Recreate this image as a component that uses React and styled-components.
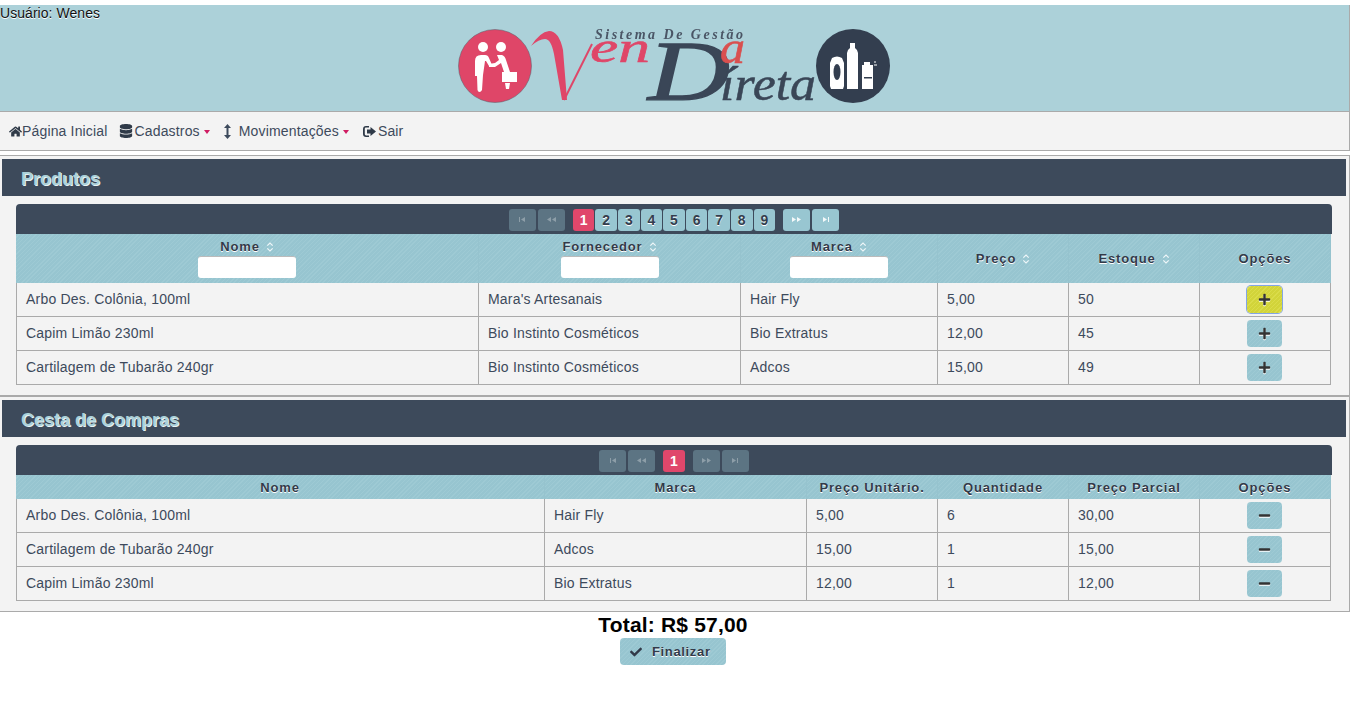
import React from 'react';
import styled, { createGlobalStyle } from 'styled-components';
import { FaHome, FaDatabase, FaCheck, FaPlus, FaMinus } from 'react-icons/fa';

const Global = createGlobalStyle`
  html, body { margin: 0; padding: 0; background: #fff; }
  body { font-family: "Liberation Sans", Arial, sans-serif; font-size: 14px; overflow: hidden; }
  * { box-sizing: border-box; }
`;

const stripes = `repeating-linear-gradient(135deg, #97c5d0 0, #97c5d0 2px, #9ecad4 2px, #9ecad4 3px)`;

const Page = styled.div`
  width: 1350px;
  padding-top: 5px;
`;
const Header = styled.header`
  position: relative;
  height: 107px;
  background: #acd1d9;
  border-bottom: 1px solid #aaa;
  border-right: 1px solid #aaa;
  display: flex;
  justify-content: flex-start;
  padding: 23px 0 0 458px;
`;
const UserLabel = styled.div`
  position: absolute;
  left: 0;
  top: 0;
  font-size: 14px;
  letter-spacing: 0.05px;
  line-height: 16px;
  color: #111;
  text-shadow: 0 1px 0 #fff;
`;
const Nav = styled.nav`
  height: 39px;
  background: #f3f3f3;
  border-bottom: 1px solid #aaa;
  border-right: 1px solid #aaa;
  display: flex;
  align-items: center;
  padding-left: 9px;
  color: #3d4a5c;
  font-size: 14px;
  letter-spacing: 0.16px;
`;
const NavItem = styled.div`
  display: flex;
  align-items: center;
  margin-right: ${p => p.$gap}px;
  white-space: nowrap;
  svg { flex: none; }
`;
const NavIconSlot = styled.span`
  display: flex;
  margin-right: ${p => p.$gap}px;
`;
const Caret = styled.span`
  width: 0;
  height: 0;
  margin-left: 4px;
  margin-top: 2px;
  border-left: 3.5px solid transparent;
  border-right: 3.5px solid transparent;
  border-top: 4px solid #d01c62;
`;
const Panel = styled.section`
  background: #f3f3f3;
  border-top: 1px solid #aaa;
  border-bottom: 1px solid #aaa;
  border-right: 1px solid #aaa;
  padding: 3px 3px 10px 2px;
  margin-top: ${p => p.$top}px;
`;
const Title = styled.h2`
  margin: 0;
  height: 37px;
  background: #3d4a5b;
  color: #acd1d9;
  font-size: 18px;
  line-height: 41px;
  font-weight: bold;
  padding-left: 19px;
  text-shadow: 1px 1px 0 #e8f4f6;
`;
const TableBox = styled.div`
  width: 1316px;
  margin: 8px 0 0 14px;
`;
const Pager = styled.div`
  height: 30px;
  background: #3d4a5b;
  border-radius: 4px 4px 0 0;
  display: flex;
  align-items: center;
  justify-content: center;
  padding-top: 1px;
`;
const PagerGroup = styled.div`
  display: flex;
  gap: 2px;
  margin: 0 4px;
`;
const PageNumbers = styled.div`
  display: flex;
  gap: 1px;
  margin: 0 4px;
`;
const PageNav = styled.div`
  width: 27px;
  height: 22px;
  border-radius: 3px;
  display: flex;
  align-items: center;
  justify-content: center;
  background: ${p => (p.$disabled ? '#5c7483' : '#98c6d1')};
  svg { display: block; opacity: ${p => (p.$disabled ? 0.3 : 0.9)}; }
`;
const PageNum = styled.div`
  height: 22px;
  padding: 0 6.9px;
  border-radius: 3px;
  font-size: 14px;
  font-weight: bold;
  line-height: 23px;
  color: ${p => (p.$active ? '#fff' : '#333d4d')};
  text-shadow: ${p => (p.$active ? 'none' : '0 1px 0 #fff')};
  background: ${p => (p.$active ? '#e0476b' : '#98c6d1')};
`;
const Table = styled.table`
  width: 1315px;
  border-collapse: separate;
  border-spacing: 0;
  table-layout: fixed;
`;
const Th = styled.th`
  height: ${p => p.$h}px;
  padding: 0;
  background: ${stripes};
  color: #323a49;
  font-size: 13px;
  font-weight: bold;
  letter-spacing: 0.85px;
  text-shadow: 0 1px 0 #fff;
  text-align: center;
  vertical-align: middle;
  border-right: 1px solid #96c3ce;
`;
const SortWrap = styled.span`
  display: inline-block;
  margin-left: 6px;
  vertical-align: -1px;
`;
const FilterInput = styled.input`
  display: block;
  width: 98px;
  height: 22px;
  margin: 2px auto 1px;
  padding: 0;
  background: #fff;
  border: none;
  border-top: 1px solid #bbb;
  border-radius: 3px;
`;
const Td = styled.td`
  height: 34px;
  padding: 0 9px 2px;
  color: #3d4a5c;
  font-size: 14px;
  letter-spacing: 0.2px;
  border-right: 1px solid #aaa;
  border-bottom: 1px solid #aaa;
  white-space: nowrap;
  &:first-child { border-left: 1px solid #aaa; }
`;
const ActionCell = styled(Td)`
  padding: 0 2px 0 0;
  text-align: center;
`;
const RowButton = styled.button`
  display: inline-flex;
  align-items: center;
  justify-content: center;
  vertical-align: middle;
  width: 35px;
  height: 27px;
  padding: 0;
  border: none;
  border-radius: 4px;
  color: #333;
  background: ${p => (p.$focus
    ? 'repeating-linear-gradient(135deg, #d2d43a 0, #d2d43a 2px, #dadc4a 2px, #dadc4a 3px)'
    : stripes)};
  box-shadow: ${p => (p.$focus ? '0 0 0 1px #83a5e6' : 'none')};
  svg { filter: drop-shadow(0 1px 0 #fff); }
`;
const Footer = styled.div`
  display: flex;
  flex-direction: column;
  align-items: center;
  padding-right: 4px;
`;
const Total = styled.div`
  font-size: 21px;
  letter-spacing: 0.18px;
  font-weight: bold;
  line-height: 26px;
  color: #000;
`;
const FinishButton = styled.button`
  display: flex;
  align-items: center;
  gap: 10px;
  width: 106px;
  height: 27px;
  padding: 0 0 0 10px;
  border: none;
  border-radius: 4px;
  background: ${stripes};
  color: #323a49;
  font-family: inherit;
  font-size: 13px;
  font-weight: bold;
  letter-spacing: 0.65px;
  text-shadow: 0 1px 0 #fff;
`;

const SortIcon = () => (
  <SortWrap>
    <svg width="8" height="10" viewBox="0 0 8 10" fill="none" stroke="#eef6f8" strokeWidth="1.2" style={{ display: 'block' }}>
      <path d="M1.300 3.700l2.700-2.700 2.700 2.700M1.300 6.300l2.700 2.700 2.700-2.700" />
    </svg>
  </SortWrap>
);

const PagerIcon = ({ kind }) => {
  const paths = {
    first: 'M2 2h1v5H2zM8 2v5L4 4.5z',
    prev: 'M6 2v5L2 4.5zM11 2v5L7 4.5z',
    next: 'M2 2v5l4-2.5zM7 2v5l4-2.5z',
    last: 'M2 2v5l4-2.5zM7 2h1v5H7z',
  };
  const w = kind === 'prev' || kind === 'next' ? 13 : 10;
  return (
    <svg width={w} height="9" viewBox={`0 0 ${w} 9`} fill="#fff">
      <path d={paths[kind]} />
    </svg>
  );
};

const ResizeIcon = () => (
  <svg width="9" height="15" viewBox="0 0 9 15" fill="#3d4a5c">
    <path d="M4.5 0L8 4H5.5v7H8l-3.5 4L1 11h2.500V4H1z" />
  </svg>
);
const LogoutIcon = () => (
  <svg width="13" height="11" viewBox="0 0 13 11" fill="#2f3a48">
    <path d="M3 0h3v1.600H3.200c-.9 0-1.400.5-1.400 1.400v5c0 .9.5 1.400 1.400 1.400H6V11H3C1.200 11 0 9.800 0 8V3C0 1.200 1.200 0 3 0z" />
    <path d="M4 3.500h3.500V1L13 5.500 7.500 10V7.500H4z" />
  </svg>
);

const Logo = () => (
  <svg width="436" height="82" viewBox="458 28 436 82" style={{ display: 'block', filter: 'blur(0.7px)' }}>
    <circle cx="495" cy="66" r="36.500" fill="#df4668" stroke="#55606a" strokeOpacity="0.5" strokeWidth="1" />
    <g fill="#fff">
      <circle cx="483" cy="47" r="5" />
      <circle cx="501" cy="47" r="5" />
      <path d="M475 61q0-6 6-6h4q3 0 4 3l3 7-3 1-3-5h-1l-2 14-1 15q-1 2-2.500 2t-2-2l-.5-14h-2v-7z" />
      <path d="M497 55h5q3 1 4 5l4 12h-6l-3-9-6 4h-6v-3l6-1 4-3-2-5z" />
      <rect x="502" y="72" width="15" height="10" />
      <path d="M505 83h5l-1 6h-3z" />
    </g>
    <path d="M531 46Q540 32 549 31Q559 31 563 50L567 100L562 100L554 54Q551 39 545 39Q539 39 531 46z" fill="#df4668" />
    <path d="M564 100L592 44" fill="none" stroke="#df4668" strokeWidth="2" />
    <text x="590" y="62" fontFamily="Liberation Serif" fontStyle="italic" fontSize="45" fill="#df4668" stroke="#df4668" strokeWidth="0.6" textLength="60" lengthAdjust="spacingAndGlyphs">en</text>
    <text x="595" y="39" fontFamily="Liberation Serif" fontStyle="italic" fontWeight="bold" fontSize="14" fill="#4a5565" textLength="148" lengthAdjust="spacing">Sistema De Gestão</text>
    <text x="648" y="100" fontFamily="Liberation Serif" fontStyle="italic" fontSize="84" fill="#3a4657" stroke="#3a4657" strokeWidth="1.300" textLength="82" lengthAdjust="spacingAndGlyphs">D</text>
    <text x="720" y="63" fontFamily="Liberation Serif" fontStyle="italic" fontSize="46" fill="#d9504f" stroke="#d9504f" strokeWidth="0.6" textLength="25" lengthAdjust="spacingAndGlyphs">a</text>
    <text x="720" y="100" fontFamily="Liberation Serif" fontStyle="italic" fontSize="48" fill="#3a4657" stroke="#3a4657" strokeWidth="0.5" textLength="96" lengthAdjust="spacingAndGlyphs">íreta</text>
    <circle cx="853" cy="66" r="37" fill="#333e4f" />
    <g fill="#fff">
      <path d="M832 58q5-3 10 0l2 5v23l-1 3h-12l-1-3V63z" />
      <path d="M850 43h5v5q3 2 3 5v36h-11V53q0-3 3-5z" />
      <path d="M864 62h6v3h3v24h-11V65h2z" />
    </g>
    <ellipse cx="837" cy="72" rx="3.500" ry="8" fill="#333e4f" />
    <rect x="864" y="77" width="8" height="1.500" fill="#333e4f" />
    <path d="M874 62h2M874 65h3" stroke="#fff" strokeWidth="1" />
  </svg>
);

const Pages = ({ count, disabledNext }) => (
  <Pager>
    <PagerGroup>
      <PageNav $disabled><PagerIcon kind="first" /></PageNav>
      <PageNav $disabled><PagerIcon kind="prev" /></PageNav>
    </PagerGroup>
    <PageNumbers>
      {Array.from({ length: count }, (_, i) => (
        <PageNum key={i} $active={i === 0}>{i + 1}</PageNum>
      ))}
    </PageNumbers>
    <PagerGroup>
      <PageNav $disabled={disabledNext}><PagerIcon kind="next" /></PageNav>
      <PageNav $disabled={disabledNext}><PagerIcon kind="last" /></PageNav>
    </PagerGroup>
  </Pager>
);

const products = [
  ['Arbo Des. Colônia, 100ml', "Mara's Artesanais", 'Hair Fly', '5,00', '50'],
  ['Capim Limão 230ml', 'Bio Instinto Cosméticos', 'Bio Extratus', '12,00', '45'],
  ['Cartilagem de Tubarão 240gr', 'Bio Instinto Cosméticos', 'Adcos', '15,00', '49'],
];
const basket = [
  ['Arbo Des. Colônia, 100ml', 'Hair Fly', '5,00', '6', '30,00'],
  ['Cartilagem de Tubarão 240gr', 'Adcos', '15,00', '1', '15,00'],
  ['Capim Limão 230ml', 'Bio Extratus', '12,00', '1', '12,00'],
];

const Columns = ({ widths }) => (
  <colgroup>
    {widths.map((w, i) => <col key={i} width={w} />)}
  </colgroup>
);

export default function App() {
  return (
    <Page>
      <Global />
      <Header>
        <UserLabel>Usuário: Wenes</UserLabel>
        <Logo />
      </Header>
      <Nav>
        <NavItem $gap={11}><FaHome size={13} color="#2f3a48" />Página Inicial</NavItem>
        <NavItem $gap={13}><NavIconSlot $gap={2}><FaDatabase size={14} color="#2f3a48" /></NavIconSlot>Cadastros<Caret /></NavItem>
        <NavItem $gap={14}><NavIconSlot $gap={7}><ResizeIcon /></NavIconSlot>Movimentações<Caret /></NavItem>
        <NavItem $gap={0}><NavIconSlot $gap={2}><LogoutIcon /></NavIconSlot>Sair</NavItem>
      </Nav>
      <Panel $top={4}>
        <Title>Produtos</Title>
        <TableBox>
          <Pages count={9} />
          <Table>
            <Columns widths={[463, 262, 197, 131, 131, 131]} />
            <thead>
              <tr>
                <Th $h={49}>Nome<SortIcon /><FilterInput /></Th>
                <Th $h={49}>Fornecedor<SortIcon /><FilterInput /></Th>
                <Th $h={49}>Marca<SortIcon /><FilterInput /></Th>
                <Th $h={49}>Preço<SortIcon /></Th>
                <Th $h={49}>Estoque<SortIcon /></Th>
                <Th $h={49}>Opções</Th>
              </tr>
            </thead>
            <tbody>
              {products.map((r, i) => (
                <tr key={i}>
                  {r.map((c, j) => <Td key={j}>{c}</Td>)}
                  <ActionCell><RowButton $focus={i === 0}><FaPlus size={13} /></RowButton></ActionCell>
                </tr>
              ))}
            </tbody>
          </Table>
        </TableBox>
      </Panel>
      <Panel $top={0}>
        <Title>Cesta de Compras</Title>
        <TableBox>
          <Pages count={1} disabledNext />
          <Table>
            <Columns widths={[529, 262, 131, 131, 131, 131]} />
            <thead>
              <tr>
                {['Nome', 'Marca', 'Preço Unitário.', 'Quantidade', 'Preço Parcial', 'Opções'].map(h => (
                  <Th key={h} $h={24}>{h}</Th>
                ))}
              </tr>
            </thead>
            <tbody>
              {basket.map((r, i) => (
                <tr key={i}>
                  {r.map((c, j) => <Td key={j}>{c}</Td>)}
                  <ActionCell><RowButton><FaMinus size={13} /></RowButton></ActionCell>
                </tr>
              ))}
            </tbody>
          </Table>
        </TableBox>
      </Panel>
      <Footer>
        <Total>Total: R$ 57,00</Total>
        <FinishButton><FaCheck size={12} />Finalizar</FinishButton>
      </Footer>
    </Page>
  );
}
